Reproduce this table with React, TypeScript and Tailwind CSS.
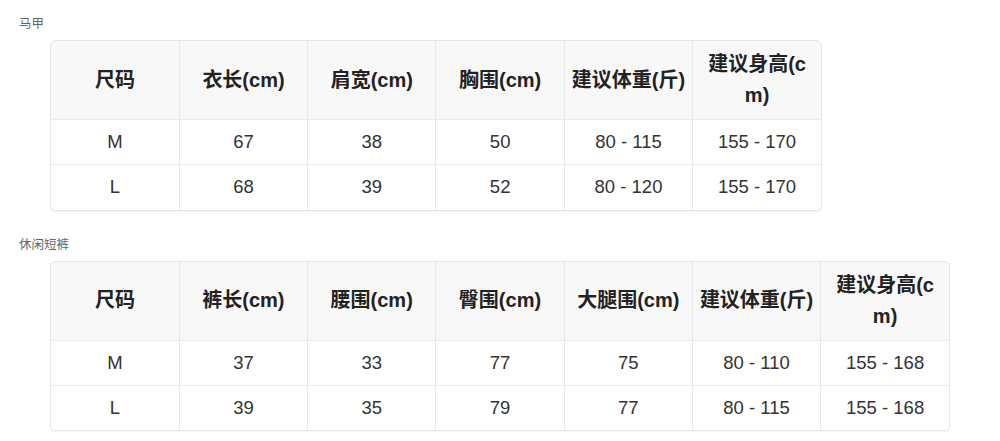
import React from 'react';

interface SizeTableProps {
  title: string;
  headers: string[];
  rows: string[][];
  width: string;
}

const font = { fontFamily: '"Liberation Sans", Arial, "Noto Sans CJK SC", sans-serif' };

const SizeTable: React.FC<SizeTableProps> = ({ title, headers, rows, width }) => {
  return (
    <div>
      <div className="text-[12.5px] leading-4 text-[#666]">{title}</div>
      <div className={`mt-2 ml-[31px] ${width} overflow-hidden rounded-[5px] border border-[#e6e6e6] shadow-[0_1px_2px_rgba(0,0,0,0.04)]`}>
        <table className="w-full table-fixed border-collapse">
          <thead>
            <tr className="h-[76px] bg-[#f8f8f8]">
              {headers.map((h, i) => (
                <th
                  key={i}
                  className={`px-[3px] py-2 text-center align-middle text-[20px] font-bold leading-[31px] text-[#222] break-all ${
                    i < headers.length - 1 ? 'border-r border-[#e8e8e8]' : ''
                  }`}
                >
                  {h}
                </th>
              ))}
            </tr>
          </thead>
          <tbody>
            {rows.map((row, r) => (
              <tr key={r} className="h-[45px] border-t border-[#ebebeb]">
                {row.map((cell, i) => (
                  <td
                    key={i}
                    className={`text-center align-middle text-[18.5px] leading-[30px] text-[#333] ${
                      i < row.length - 1 ? 'border-r border-[#e8e8e8]' : ''
                    }`}
                  >
                    {cell}
                  </td>
                ))}
              </tr>
            ))}
          </tbody>
        </table>
      </div>
    </div>
  );
};

export default function App() {
  return (
    <div className="min-h-screen bg-white px-[19px] pt-4" style={font}>
      <SizeTable
        title="马甲"
        width="w-[772px]"
        headers={['尺码', '衣长(cm)', '肩宽(cm)', '胸围(cm)', '建议体重(斤)', '建议身高(cm)']}
        rows={[
          ['M', '67', '38', '50', '80 - 115', '155 - 170'],
          ['L', '68', '39', '52', '80 - 120', '155 - 170'],
        ]}
      />
      <div className="mt-[26px]">
        <SizeTable
          title="休闲短裤"
          width="w-[900px]"
          headers={['尺码', '裤长(cm)', '腰围(cm)', '臀围(cm)', '大腿围(cm)', '建议体重(斤)', '建议身高(cm)']}
          rows={[
            ['M', '37', '33', '77', '75', '80 - 110', '155 - 168'],
            ['L', '39', '35', '79', '77', '80 - 115', '155 - 168'],
          ]}
        />
      </div>
    </div>
  );
}
